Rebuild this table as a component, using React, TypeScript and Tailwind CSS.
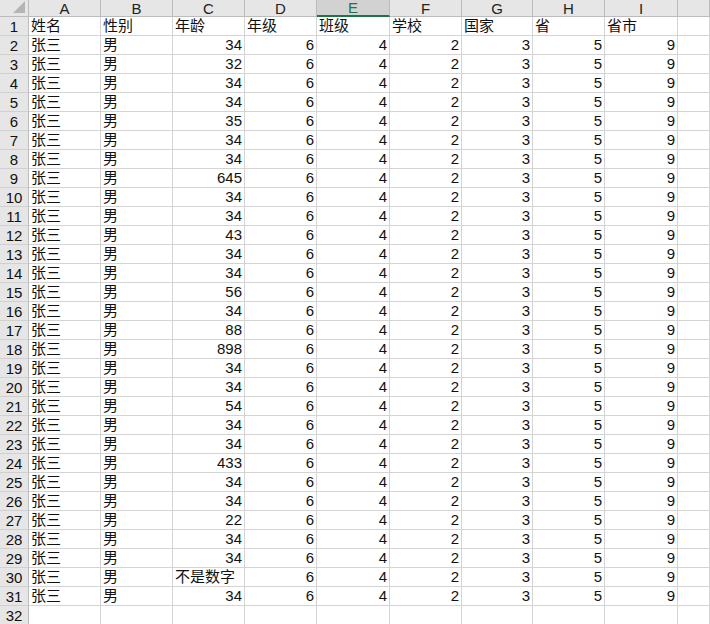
import React from 'react';

const cols = ['A', 'B', 'C', 'D', 'E', 'F', 'G', 'H', 'I', ''];
const headers = ['姓名', '性别', '年龄', '年级', '班级', '学校', '国家', '省', '省市'];
const ages: (number | string)[] = [
	34, 32, 34, 34, 35, 34, 34, 645, 34, 34, 43, 34, 34, 56, 34, 88, 898, 34, 34, 54,
	34, 34, 433, 34, 34, 22, 34, 34, '不是数字', 34,
];

const font = { fontFamily: '"Liberation Sans", "Noto Sans CJK SC", sans-serif' };

const App = () => {
	const rows: (number | string)[][] = ages.map((age) => ['张三', '男', age, 6, 4, 2, 3, 5, 9, '']);

	return (
		<div className="w-[710px] h-[624px] overflow-hidden bg-white text-[15px] text-[#111]" style={font}>
			<div className="grid grid-cols-[29px_72px_72px_72px_72px_73px_72px_71px_72px_73px_1fr] grid-rows-[17px] auto-rows-[19px]">
				{/* corner */}
				<div className="relative bg-[#e6e6e6] border-r border-b border-[#bcbcbc]">
					<div className="absolute right-[3px] bottom-[3px] w-0 h-0 border-l-[12px] border-l-transparent border-b-[12px] border-b-[#b5b5b5]" />
				</div>
				{cols.map((c, i) =>
					c === 'E' ? (
						<div
							key={i}
							className="flex items-center justify-center bg-[#d2d2d2] border-r border-[#bcbcbc] border-b-2 border-b-[#217346] text-[#217346] leading-none"
						>
							{c}
						</div>
					) : (
						<div
							key={i}
							className="flex items-center justify-center bg-[#e6e6e6] border-r border-b border-[#bcbcbc] text-[#222] leading-none"
						>
							{c}
						</div>
					),
				)}

				{/* row 1 */}
				<div className="flex items-center justify-center bg-[#e6e6e6] border-r border-r-[#bcbcbc] border-b border-b-[#d0d0d0] leading-none">1</div>
				{headers.map((h, i) => (
					<div key={i} className="flex items-center pl-[2px] border-r border-b border-[#d4d4d4] whitespace-nowrap">
						{h}
					</div>
				))}
				<div className="border-r border-b border-[#d4d4d4]" />

				{rows.map((r, ri) => (
					<React.Fragment key={ri}>
						<div className="flex items-center justify-center bg-[#e6e6e6] border-r border-r-[#bcbcbc] border-b border-b-[#d0d0d0] leading-none">
							{ri + 2}
						</div>
						{r.map((v, ci) => (
							<div
								key={ci}
								className={
									typeof v === 'number'
										? 'flex items-center justify-end pr-[2px] border-r border-b border-[#d4d4d4]'
										: 'flex items-center pl-[2px] border-r border-b border-[#d4d4d4] whitespace-nowrap'
								}
							>
								{v}
							</div>
						))}
					</React.Fragment>
				))}

				{/* row 32 */}
				<div className="flex items-center justify-center bg-[#e6e6e6] border-r border-r-[#bcbcbc] border-b border-b-[#d0d0d0] leading-none">32</div>
				{cols.map((_, i) => (
					<div key={i} className="border-r border-b border-[#d4d4d4]" />
				))}
			</div>
		</div>
	);
};

export default App;
